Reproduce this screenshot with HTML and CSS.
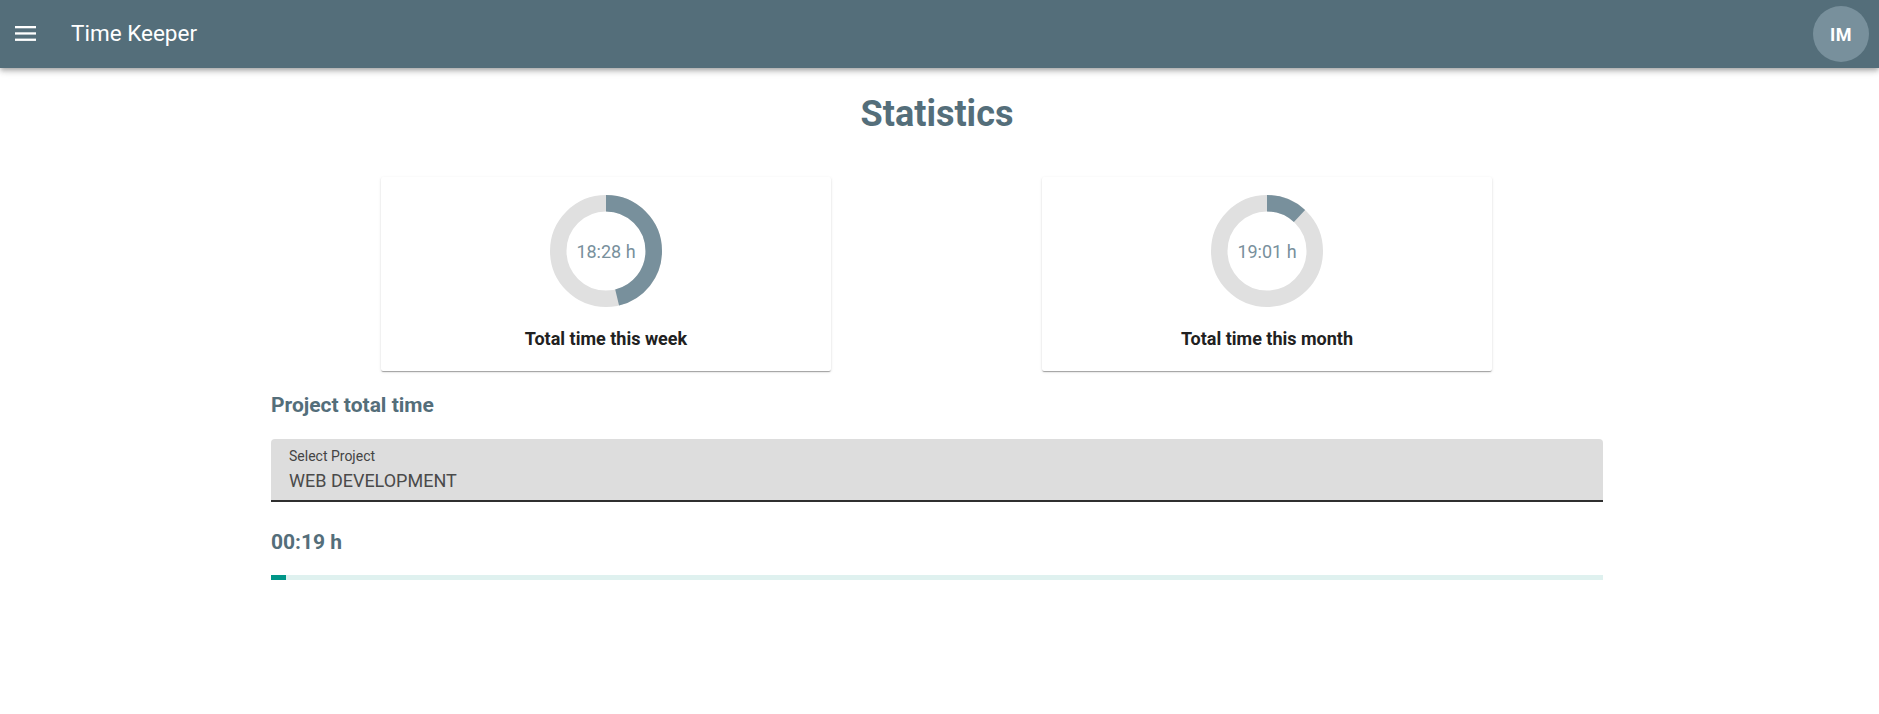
FILE: index.html
```html
<!DOCTYPE html>
<html lang="en">
<head>
<meta charset="utf-8">
<title>Time Keeper</title>
<link rel="stylesheet" href="styles.css">
</head>
<body>
<header class="toolbar">
  <button class="menu-btn" aria-label="Menu">
    <svg width="21" height="15" viewBox="0 0 21 15"><rect x="0" y="0" width="21" height="2.3" fill="#fff"/><rect x="0" y="6.3" width="21" height="2.3" fill="#fff"/><rect x="0" y="12.6" width="21" height="2.3" fill="#fff"/></svg>
  </button>
  <span class="app-title">Time Keeper</span>
  <span class="spacer"></span>
  <div class="avatar">IM</div>
</header>
<main class="content">
  <h1 class="page-title">Statistics</h1>
  <section class="cards">
    <div class="card">
      <div class="donut">
        <svg width="112" height="112" viewBox="0 0 112 112">
          <circle cx="56" cy="56" r="47.75" fill="none" stroke="#e0e0e0" stroke-width="16.5"/>
          <circle cx="56" cy="56" r="47.75" fill="none" stroke="#78909c" stroke-width="16.5" stroke-dasharray="138.5 300" transform="rotate(-90 56 56)"/>
        </svg>
        <span class="donut-text">18:28 h</span>
      </div>
      <div class="card-label">Total time this week</div>
    </div>
    <div class="card">
      <div class="donut">
        <svg width="112" height="112" viewBox="0 0 112 112">
          <circle cx="56" cy="56" r="47.75" fill="none" stroke="#e0e0e0" stroke-width="16.5"/>
          <circle cx="56" cy="56" r="47.75" fill="none" stroke="#78909c" stroke-width="16.5" stroke-dasharray="35.7 300" transform="rotate(-90 56 56)"/>
        </svg>
        <span class="donut-text">19:01 h</span>
      </div>
      <div class="card-label">Total time this month</div>
    </div>
  </section>
  <h2 class="section-title">Project total time</h2>
  <div class="select-field">
    <span class="select-label">Select Project</span>
    <span class="select-value">WEB DEVELOPMENT</span>
  </div>
  <div class="project-time">00:19 h</div>
  <div class="progress"><div class="progress-fill" style="width: 1.13%"></div></div>
</main>
</body>
</html>
```
FILE: styles.css
```css
* { box-sizing: border-box; }
html, body { margin: 0; padding: 0; background: #fff; }
body { font-family: Roboto, "Noto Sans", sans-serif; color: #212121; }

.toolbar {
  height: 68px;
  background: #546e7a;
  display: flex;
  align-items: center;
  padding: 0 10px 0 15px;
  box-shadow: 0 2px 4px -1px rgba(0,0,0,.2), 0 4px 5px 0 rgba(0,0,0,.14), 0 1px 10px 0 rgba(0,0,0,.12);
  position: relative;
  z-index: 2;
}
.menu-btn {
  background: none;
  border: 0;
  padding: 0;
  margin: 0;
  width: 21px;
  height: 15px;
  display: flex;
  margin-top: -1px;
}
.app-title {
  color: #fff;
  font-size: 22.5px;
  font-weight: 400;
  margin-left: 35px;
  margin-bottom: 3px;
}
.spacer { flex: 1; }
.avatar {
  width: 56px;
  height: 56px;
  border-radius: 50%;
  background: #78909c;
  color: #fff;
  font-weight: 700;
  font-size: 18px;
  letter-spacing: 0.5px;
  display: flex;
  align-items: center;
  justify-content: center;
}

.content {
  width: 1332px;
  margin-left: 271px;
  display: flex;
  flex-direction: column;
}
.page-title {
  margin: 25px 0 0;
  text-align: center;
  font-size: 36px;
  line-height: 42px;
  font-weight: 700;
  color: #546e7a;
}
.cards {
  margin-top: 42px;
  display: flex;
  justify-content: space-between;
  padding: 0 111px 0 110px;
}
.card {
  width: 450px;
  height: 194px;
  background: #fff;
  border-radius: 2px;
  box-shadow: 0 2px 1px -1px rgba(0,0,0,.2), 0 1px 1px 0 rgba(0,0,0,.14), 0 1px 3px 0 rgba(0,0,0,.12);
  display: flex;
  flex-direction: column;
  align-items: center;
  padding-top: 18px;
}
.donut {
  display: grid;
  width: 112px;
  height: 112px;
}
.donut svg, .donut-text { grid-area: 1 / 1; }
.donut-text {
  align-self: center;
  justify-self: center;
  font-size: 18px;
  color: #78909c;
}
.card-label {
  margin-top: 21px;
  font-size: 18px;
  font-weight: 700;
  color: #212121;
}
.section-title {
  margin: 21px 0 0;
  font-size: 21px;
  line-height: 26px;
  font-weight: 700;
  color: #546e7a;
}
.select-field {
  margin-top: 21px;
  height: 63px;
  background: #dddddd;
  border-radius: 4px 4px 0 0;
  border-bottom: 2px solid #2f2f2f;
  display: flex;
  flex-direction: column;
  padding: 8px 18px 0;
}
.select-label {
  font-size: 14px;
  color: #444;
  line-height: 18px;
}
.select-value {
  font-size: 18px;
  color: #4a4a4a;
  line-height: 22px;
  margin-top: 5px;
}
.project-time {
  margin-top: 27px;
  font-size: 21px;
  line-height: 26px;
  font-weight: 700;
  color: #546e7a;
}
.progress {
  margin-top: 20px;
  height: 5px;
  background: #dff1ef;
}
.progress-fill {
  height: 100%;
  background: #009688;
}
```
